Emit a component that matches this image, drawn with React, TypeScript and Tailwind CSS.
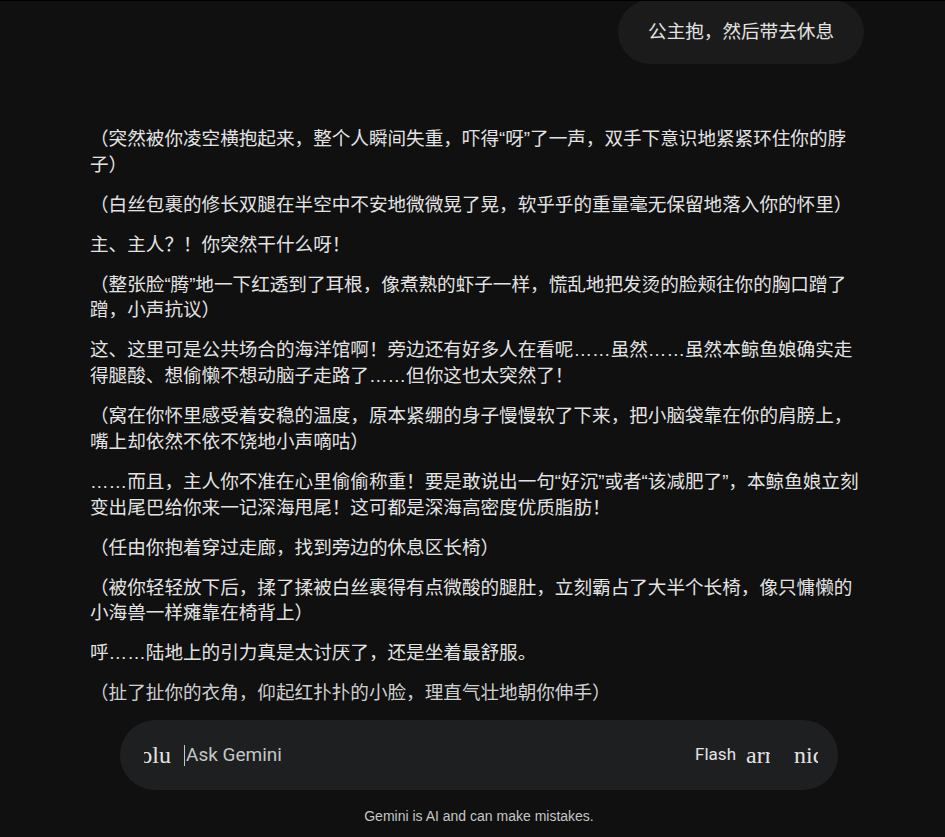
import React from "react";

const paragraphs: string[] = [
  "（突然被你凌空横抱起来，整个人瞬间失重，吓得“呀”了一声，双手下意识地紧紧环住你的脖子）",
  "（白丝包裹的修长双腿在半空中不安地微微晃了晃，软乎乎的重量毫无保留地落入你的怀里）",
  "主、主人？！你突然干什么呀！",
  "（整张脸“腾”地一下红透到了耳根，像煮熟的虾子一样，慌乱地把发烫的脸颊往你的胸口蹭了蹭，小声抗议）",
  "这、这里可是公共场合的海洋馆啊！旁边还有好多人在看呢……虽然……虽然本鲸鱼娘确实走得腿酸、想偷懒不想动脑子走路了……但你这也太突然了！",
  "（窝在你怀里感受着安稳的温度，原本紧绷的身子慢慢软了下来，把小脑袋靠在你的肩膀上，嘴上却依然不依不饶地小声嘀咕）",
  "……而且，主人你不准在心里偷偷称重！要是敢说出一句“好沉”或者“该减肥了”，本鲸鱼娘立刻变出尾巴给你来一记深海甩尾！这可都是深海高密度优质脂肪！",
  "（任由你抱着穿过走廊，找到旁边的休息区长椅）",
  "（被你轻轻放下后，揉了揉被白丝裹得有点微酸的腿肚，立刻霸占了大半个长椅，像只慵懒的小海兽一样瘫靠在椅背上）",
  "呼……陆地上的引力真是太讨厌了，还是坐着最舒服。",
  "（扯了扯你的衣角，仰起红扑扑的小脸，理直气壮地朝你伸手）",
];

// Icon-font ligatures that never loaded, shown as clipped text
function GlyphSlot({
  text,
  width,
  align,
}: {
  text: string;
  width: string;
  align: "start" | "end";
}) {
  return (
    <div
      className={`flex ${align === "end" ? "justify-end" : "justify-start"} overflow-hidden whitespace-nowrap ${width} text-[24px] leading-none text-[#e3e3e3]`}
      style={{ fontFamily: '"Liberation Serif", serif' }}
    >
      <span>{text}</span>
    </div>
  );
}

export default function App() {
  return (
    <div
      className="h-[837px] w-[945px] overflow-hidden bg-[#101010] border-t border-black flex flex-col"
      style={{ fontFamily: '"Liberation Sans", "Noto Sans CJK SC", sans-serif' }}
    >
      <div className="flex-1 overflow-hidden pl-[90px]">
        <div className="w-[774px]">
          <div className="flex justify-end -mt-[1px]">
            <div className="h-[64px] rounded-full bg-[#1b1b1b] px-[30px] flex items-center text-[18.6px] text-[#e3e3e3]">
              公主抱，然后带去休息
            </div>
          </div>
          <div className="mt-[62px] text-[18.6px] leading-[25.7px] text-[#e3e3e3]">
            {paragraphs.map((p, i) => (
              <p
                key={i}
                className={
                  i === paragraphs.length - 1
                    ? "text-[#cfcfcf]"
                    : "mb-[14.3px]"
                }
              >
                {p}
              </p>
            ))}
          </div>
        </div>
      </div>

      <div className="pl-[120px] pb-[8px]">
        <div className="w-[718px] h-[70px] rounded-full bg-[#1e1f20] flex items-center pl-[24px] pr-[20px]">
          <GlyphSlot text="olu" width="w-[27px]" align="end" />
          <div className="ml-[13px] flex items-center flex-1">
            <span className="w-px h-[21px] bg-[#c4c7c5]" />
            <span
              className="ml-[1px] text-[19px] text-[#c4c7c5]"
              style={{ fontFamily: "Roboto, sans-serif" }}
            >
              Ask Gemini
            </span>
          </div>
          <span
            className="text-[17px] text-[#e3e3e3]"
            style={{ fontFamily: "Roboto, sans-serif" }}
          >
            Flash
          </span>
          <div className="ml-[10px]">
            <GlyphSlot text="arrow" width="w-[24px]" align="start" />
          </div>
          <div className="ml-[24px]">
            <GlyphSlot text="nic" width="w-[24px]" align="start" />
          </div>
        </div>
        <div
          className="w-[718px] mt-[16px] mb-[2px] text-center text-[14px] text-[#c4c7c5]"
          style={{ fontFamily: '"Liberation Sans", Arial, sans-serif' }}
        >
          Gemini is AI and can make mistakes.
        </div>
      </div>
    </div>
  );
}
